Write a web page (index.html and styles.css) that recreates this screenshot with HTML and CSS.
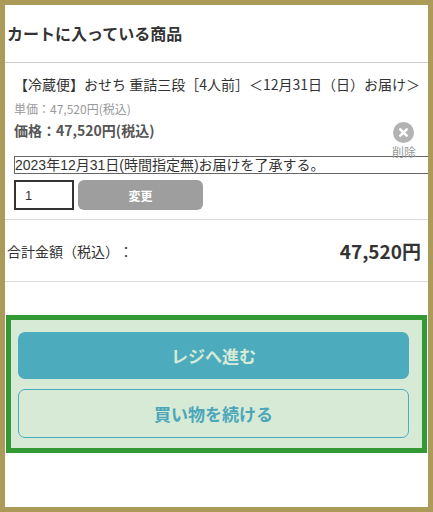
FILE: index.html
```html
<!DOCTYPE html>
<html lang="ja">
<head>
    <meta charset="UTF-8">
    <meta name="viewport" content="width=device-width, initial-scale=1.0">
    <title>カート</title>
    <link rel="stylesheet" href="styles.css">
</head>
<body>
<div class="frame">
    <div class="cart-head">
        <h2>カートに入っている商品</h2>
    </div>

    <div class="cart-item">
        <p class="item-name">【冷蔵便】おせち 重詰三段［4人前］＜12月31日（日）お届け＞</p>
        <p class="unit-price">単価：47,520円(税込)</p>
        <p class="price">価格：47,520円(税込)</p>
        <a class="delete">
            <svg class="delete-icon" width="21" height="21" viewBox="0 0 21 21">
                <circle cx="10.5" cy="10.5" r="10.5" fill="#b3b3b3"/>
                <path d="M7.3 7.3l6.4 6.4M13.7 7.3l-6.4 6.4" stroke="#fff" stroke-width="2.6" stroke-linecap="round"/>
            </svg>
            <span>削除</span>
        </a>
        <div class="notice">2023年12月31日(時間指定無)お届けを了承する。</div>
        <div class="qty-row">
            <input class="qty" type="text" value="1">
            <button class="change" type="button">変更</button>
        </div>
    </div>

    <div class="total">
        <span class="total-label">合計金額（税込）：</span>
        <span class="total-value">47,520円</span>
    </div>

    <div class="actions">
        <a class="btn btn-primary">レジへ進む</a>
        <a class="btn btn-outline">買い物を続ける</a>
    </div>
</div>
</body>
</html>
```

FILE: styles.css
```css
html {
    height: 100%;
}
body {
    margin: 0;
    height: 100%;
    font-family: "Noto Sans CJK JP", "Noto Sans", sans-serif;
    color: #333;
    background: #fff;
}
.frame {
    position: relative;
    box-sizing: border-box;
    width: 433px;
    height: 512px;
    border: 5px solid #ac9a58;
    overflow: hidden;
}
.cart-head {
    height: 58px;
    box-sizing: border-box;
    border-bottom: 1px solid #ccc;
    padding: 16px 0 0 2px;
}
.cart-head h2 {
    margin: 0;
    font-size: 16px;
    line-height: 24px;
    font-weight: 700;
}
.cart-item {
    position: relative;
    height: 157px;
    box-sizing: border-box;
    border-bottom: 1px solid #ddd;
    padding: 10px 0 0 9px;
}
.cart-item p {
    margin: 0;
}
.item-name {
    font-size: 14px;
    line-height: 22px;
    white-space: nowrap;
}
.cart-item .unit-price {
    margin-top: 5px;
    font-size: 12px;
    line-height: 18px;
    color: #999;
}
.cart-item .price {
    margin-top: 3px;
    font-size: 14px;
    line-height: 18px;
    font-weight: 700;
    color: #555;
}
.delete {
    position: absolute;
    top: 59px;
    right: 12px;
    display: flex;
    flex-direction: column;
    align-items: center;
    font-size: 12px;
    line-height: 14px;
    color: #999;
}
.delete-icon {
    display: block;
    margin-bottom: 2px;
}
.notice {
    box-sizing: border-box;
    width: 430px;
    height: 18px;
    margin-top: 17px;
    border: 1px solid #666;
    font-family: "Liberation Sans", "Noto Sans CJK JP", sans-serif;
    font-size: 14px;
    line-height: 16px;
    color: #333;
    white-space: nowrap;
}
.qty-row {
    display: flex;
    gap: 4px;
    margin-top: 6px;
}
.qty {
    box-sizing: border-box;
    width: 60px;
    height: 30px;
    padding: 0 9px;
    border: 2px solid #333;
    font-family: "Liberation Sans", sans-serif;
    font-size: 13px;
    color: #333;
}
.change {
    width: 125px;
    height: 30px;
    border: none;
    border-radius: 6px;
    background: #9e9e9e;
    color: #fff;
    font-family: inherit;
    font-size: 12px;
    font-weight: 700;
}
.total {
    display: flex;
    justify-content: space-between;
    align-items: center;
    height: 62px;
    box-sizing: border-box;
    border-bottom: 1px solid #ddd;
    padding: 0 7px 0 2px;
}
.total-label {
    font-size: 14px;
    text-spacing-trim: space-all;
}
.total-value {
    font-size: 19px;
    font-weight: 700;
}
.actions {
    display: flex;
    flex-direction: column;
    gap: 10px;
    box-sizing: border-box;
    width: 421px;
    height: 138px;
    margin: 33px 0 0 1px;
    padding: 12px 13px 0 7px;
    border: 5px solid #339933;
    background: #d6ead6;
}
.btn {
    display: flex;
    justify-content: center;
    align-items: center;
    box-sizing: border-box;
    font-size: 17px;
    font-weight: 700;
    border-radius: 7px;
}
.btn-primary {
    height: 47px;
    background: #4cabbd;
    color: #d6ead6;
}
.btn-outline {
    height: 49px;
    border: 1px solid #4cabbd;
    color: #4ca6ba;
}
```
